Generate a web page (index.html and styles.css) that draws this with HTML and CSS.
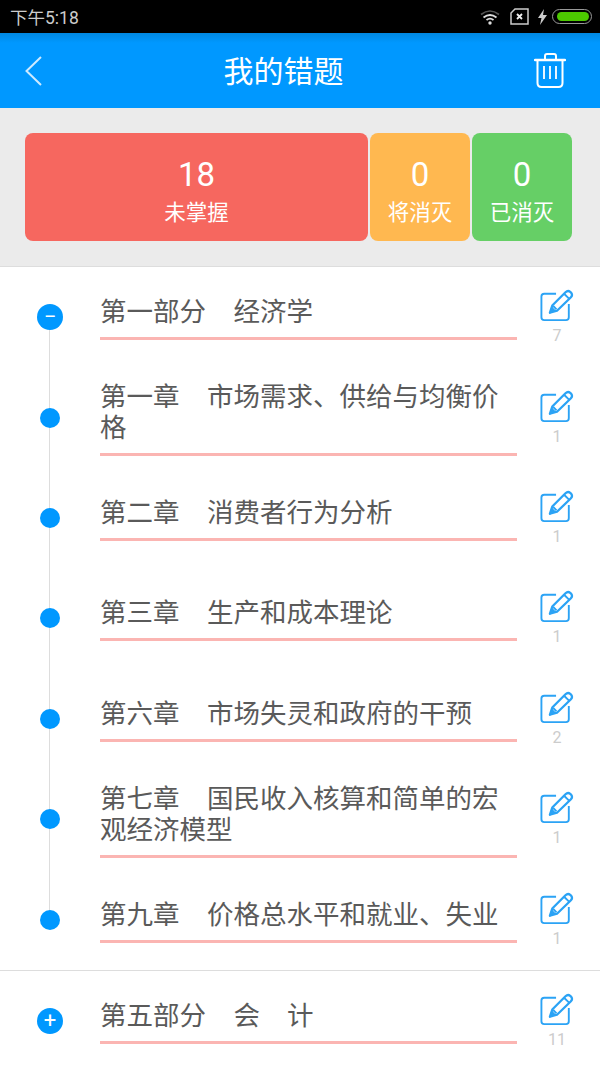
FILE: index.html
```html
<!DOCTYPE html>
<html lang="zh-CN">
<head>
    <meta charset="UTF-8">
    <meta name="viewport" content="width=device-width, initial-scale=1.0">
    <title>我的错题</title>
    <link rel="stylesheet" href="styles.css">
</head>
<body>

<svg class="defs" width="0" height="0">
    <symbol id="edit" viewBox="0 0 36 36">
        <path d="M17 5H4.500A3 3 0 0 0 1.500 8V30A3 3 0 0 0 4.500 33H27.500A3 3 0 0 0 30.500 30V16" fill="none" stroke="#2ba3f5" stroke-width="2"/>
        <path d="M10.500 25L13 17.500L27 3.500Q29.500 1 32 3L33 4Q35 6.500 32.500 9L18 23Z" fill="none" stroke="#2ba3f5" stroke-width="2.400" stroke-linejoin="round"/>
        <path d="M25.500 5L31 10.500M14 18L17.500 21.500" fill="none" stroke="#2ba3f5" stroke-width="2"/>
        <path d="M9.500 26.500L13 19L17 23Z" fill="#2ba3f5"/>
    </symbol>
</svg>

<div class="status-bar">
    <span class="time">下午5:18</span>
    <div class="status-icons">
        <svg class="wifi" width="20" height="16" viewBox="0 0 20 16">
            <path d="M1 5.500Q10 -1.500 19 5.500" fill="none" stroke="#555" stroke-width="1.600"/>
            <path d="M3.500 8.500Q10 3.500 16.500 8.500" fill="none" stroke="#ddd" stroke-width="1.800"/>
            <path d="M6.500 11Q10 8.200 13.500 11" fill="none" stroke="#ddd" stroke-width="1.800"/>
            <circle cx="10" cy="14" r="1.700" fill="#ddd"/>
        </svg>
        <svg class="sim" width="19" height="17" viewBox="0 0 19 17">
            <path d="M5 1H18V16H1V5Z" fill="none" stroke="#ccc" stroke-width="1.500"/>
            <path d="M7 6L12 11M12 6L7 11" fill="none" stroke="#eee" stroke-width="1.800"/>
        </svg>
        <svg class="bolt" width="9" height="16" viewBox="0 0 9 16">
            <path d="M6 0L0 9H3.500L2 16L9 6H5Z" fill="#ccc"/>
        </svg>
        <div class="battery"><div class="battery-fill"></div></div>
    </div>
</div>

<header class="top-bar">
    <svg class="back" width="17" height="30" viewBox="0 0 17 30">
        <path d="M16 1L1.500 15L16 29" fill="none" stroke="#cdeaff" stroke-width="2"/>
    </svg>
    <h1>我的错题</h1>
    <svg class="trash" width="32" height="35" viewBox="0 0 32 35">
        <path d="M11 6V3Q11 1 13 1H20Q22 1 22 3V6" fill="none" stroke="#fff" stroke-width="2"/>
        <path d="M1 7H31" fill="none" stroke="#fff" stroke-width="2.500" stroke-linecap="round"/>
        <path d="M3.500 7V30Q3.500 34 7.500 34H24.500Q28.500 34 28.500 30V7" fill="none" stroke="#fff" stroke-width="2"/>
        <path d="M10 13V26M16 13V26M22 13V26" fill="none" stroke="#fff" stroke-width="1.800"/>
    </svg>
</header>

<section class="stats">
    <div class="stat stat-red"><b>18</b><span>未掌握</span></div>
    <div class="stat stat-orange"><b>0</b><span>将消灭</span></div>
    <div class="stat stat-green"><b>0</b><span>已消灭</span></div>
</section>

<section class="group">
    <div class="timeline"></div>
    <div class="row">
        <div class="dot dot-big">&minus;</div>
        <div class="title">第一部分<i></i>经济学</div>
        <div class="note"><svg><use href="#edit"/></svg><span>7</span></div>
    </div>
    <div class="row">
        <div class="dot"></div>
        <div class="title">第一章<i></i>市场需求、供给与均衡价格</div>
        <div class="note"><svg><use href="#edit"/></svg><span>1</span></div>
    </div>
    <div class="row">
        <div class="dot"></div>
        <div class="title">第二章<i></i>消费者行为分析</div>
        <div class="note"><svg><use href="#edit"/></svg><span>1</span></div>
    </div>
    <div class="row">
        <div class="dot"></div>
        <div class="title">第三章<i></i>生产和成本理论</div>
        <div class="note"><svg><use href="#edit"/></svg><span>1</span></div>
    </div>
    <div class="row">
        <div class="dot"></div>
        <div class="title">第六章<i></i>市场失灵和政府的干预</div>
        <div class="note"><svg><use href="#edit"/></svg><span>2</span></div>
    </div>
    <div class="row">
        <div class="dot"></div>
        <div class="title">第七章<i></i>国民收入核算和简单的宏观经济模型</div>
        <div class="note"><svg><use href="#edit"/></svg><span>1</span></div>
    </div>
    <div class="row">
        <div class="dot"></div>
        <div class="title">第九章<i></i>价格总水平和就业、失业</div>
        <div class="note"><svg><use href="#edit"/></svg><span>1</span></div>
    </div>
</section>

<section class="group group-last">
    <div class="row">
        <div class="dot dot-big">+</div>
        <div class="title">第五部分<i></i>会<i class="small"></i>计</div>
        <div class="note"><svg><use href="#edit"/></svg><span>11</span></div>
    </div>
</section>

</body>
</html>
```

FILE: styles.css
```css
body {
    margin: 0;
    height: 1067px;
    overflow: hidden;
    background-color: #fff;
    font-family: "Noto Sans CJK SC", "Noto Sans", sans-serif;
}

.defs {
    position: absolute;
}

.status-bar {
    height: 33px;
    display: flex;
    justify-content: space-between;
    align-items: center;
    padding: 0 8px 0 10px;
    background-color: #000;
}

.time {
    font-family: Roboto, "Noto Sans CJK SC", sans-serif;
    font-size: 17.500px;
    color: #ccc;
}

.status-icons {
    display: flex;
    align-items: center;
}

.sim {
    margin-left: 10px;
}

.bolt {
    margin-left: 9px;
}

.battery {
    width: 40px;
    height: 15px;
    margin-left: 5px;
    padding: 2px 2px 2px 4px;
    box-sizing: border-box;
    border: 1px solid #999;
    border-radius: 8px;
}

.battery-fill {
    height: 100%;
    border-radius: 5px;
    background-color: #4cc800;
}

.top-bar {
    height: 75px;
    display: flex;
    align-items: center;
    padding: 0 34px 0 25px;
    background: linear-gradient(#0088e2, #0098ff 10px);
}

.top-bar h1 {
    flex: 1;
    margin: 0;
    padding: 0 9px 4px 0;
    font-size: 30px;
    font-weight: 400;
    color: #fff;
    text-align: center;
}

.stats {
    height: 159px;
    display: grid;
    grid-template-columns: 343px 100px 100px;
    grid-template-rows: 108px;
    gap: 2px;
    padding: 25px 0 0 25px;
    box-sizing: border-box;
    border-bottom: 1px solid #ddd;
    background-color: #ebebeb;
}

.stat {
    display: flex;
    flex-direction: column;
    align-items: center;
    justify-content: center;
    padding-top: 7px;
    box-sizing: border-box;
    border-radius: 8px;
    color: #fff;
}

.stat b {
    font-family: Roboto, sans-serif;
    font-size: 33px;
    font-weight: 400;
    line-height: 40px;
}

.stat span {
    font-size: 21.500px;
    line-height: 31px;
}

.stat-red {
    background-color: #f6675f;
}

.stat-orange {
    background-color: #ffb850;
}

.stat-green {
    background-color: #66cf66;
}

.group {
    position: relative;
    border-bottom: 1px solid #ddd;
}

.group-last {
    border-bottom: none;
}

.timeline {
    position: absolute;
    left: 49px;
    top: 50px;
    bottom: 50px;
    width: 1px;
    background-color: #ddd;
}

.row {
    height: 100.400px;
    display: flex;
    align-items: center;
}

.dot {
    position: relative;
    flex: none;
    width: 20px;
    height: 20px;
    margin: 0 40px;
    border-radius: 50%;
    background-color: #0098ff;
    color: #fff;
    font-family: Roboto, sans-serif;
    font-size: 22px;
    font-weight: 400;
    line-height: 25px;
    text-align: center;
}

.dot-big {
    width: 26px;
    height: 26px;
    margin: 0 37px;
}

.title {
    width: 417px;
    padding-bottom: 12px;
    border-bottom: 3px solid #fbb5b2;
    font-size: 26.500px;
    line-height: 31px;
    color: #5a5a5a;
}

.title i {
    display: inline-block;
    width: 27.500px;
}

.title i.small {
    width: 27px;
}

.note {
    display: flex;
    flex-direction: column;
    align-items: center;
    width: 34px;
    margin-left: 23px;
}

.note svg {
    width: 34px;
    height: 34px;
}

.note span {
    margin-top: 4px;
    font-family: Roboto, sans-serif;
    font-size: 16px;
    line-height: 18px;
    color: #ccc;
}
```
